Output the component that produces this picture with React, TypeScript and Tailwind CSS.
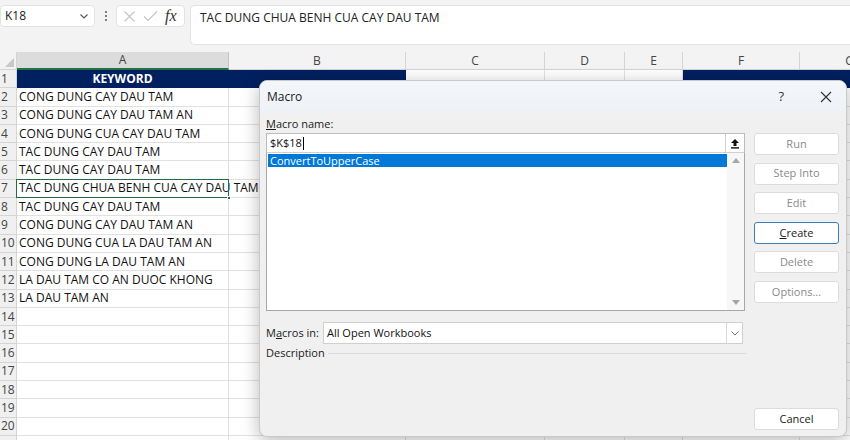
import React from "react";

const cols = [
  { k: "A", w: 212 },
  { k: "B", w: 177 },
  { k: "C", w: 139 },
  { k: "D", w: 80 },
  { k: "E", w: 58 },
  { k: "F", w: 117 },
  { k: "G", w: 100 },
];

const data: Record<number, string> = {
  2: "CONG DUNG CAY DAU TAM",
  3: "CONG DUNG CAY DAU TAM AN",
  4: "CONG DUNG CUA CAY DAU TAM",
  5: "TAC DUNG CAY DAU TAM",
  6: "TAC DUNG CAY DAU TAM",
  7: "TAC DUNG CHUA BENH CUA CAY DAU TAM",
  8: "TAC DUNG CAY DAU TAM",
  9: "CONG DUNG CAY DAU TAM AN",
  10: "CONG DUNG CUA LA DAU TAM AN",
  11: "CONG DUNG LA DAU TAM AN",
  12: "LA DAU TAM CO AN DUOC KHONG",
  13: "LA DAU TAM AN",
};

const font = { fontFamily: '"Open Sans", "Noto Sans", sans-serif' };

function Btn({ label, disabled, focused, u }: { label: string; disabled?: boolean; focused?: boolean; u?: boolean }) {
  return (
    <div
      className={`h-[22px] w-[85px] rounded-[3px] bg-white flex items-center justify-center text-[11px] ${
        focused ? "border border-[#3a7fb8]" : "border border-[#dcdcdc]"
      } ${disabled ? "text-[#8a8a8a]" : "text-[#1a1a1a]"}`}
    >
      {u ? (
        <span>
          <span className="underline">C</span>reate
        </span>
      ) : (
        label
      )}
    </div>
  );
}

export default function App() {
  const rows = Array.from({ length: 21 }, (_, i) => i + 1);
  return (
    <div className="relative w-[850px] h-[440px] overflow-hidden bg-[#f3f3f3] text-[#222]" style={font}>
      {/* Formula area */}
      <div className="h-[52px] flex items-start pt-[5px]">
        <div className="w-[95px] h-[22px] bg-white rounded-[4px] border border-[#e3e3e3] flex items-center justify-between pl-[4px] pr-[5px] text-[12px]">
          <span>K18</span>
          <svg width="10" height="10" viewBox="0 0 10 10">
            <path d="M1.5 3.5 L5 7 L8.5 3.5" fill="none" stroke="#555" strokeWidth="1.1" />
          </svg>
        </div>
        <div className="w-[21px] h-[22px] flex flex-col items-center justify-center gap-[2px]">
          <span className="w-[2px] h-[2px] bg-[#555] rounded-full" />
          <span className="w-[2px] h-[2px] bg-[#555] rounded-full" />
          <span className="w-[2px] h-[2px] bg-[#555] rounded-full" />
        </div>
        <div className="w-[69px] h-[22px] bg-white rounded-[4px] border border-[#e3e3e3] flex items-center pl-[6px] gap-[7px]">
          <svg width="13" height="13" viewBox="0 0 13 13">
            <path d="M1.5 1.5 L11.5 11.5 M11.5 1.5 L1.5 11.5" stroke="#c4c4c4" strokeWidth="1.1" />
          </svg>
          <svg width="15" height="13" viewBox="0 0 15 13">
            <path d="M1 6.5 L5 10.5 L14 1.5" fill="none" stroke="#c4c4c4" strokeWidth="1.1" />
          </svg>
          <span className="text-[16px] italic text-[#333] leading-none" style={{ fontFamily: '"Liberation Serif", serif' }}>
            fx
          </span>
        </div>
        <div className="ml-[5px] flex-1 h-[40px] bg-white rounded-l-[5px] border border-[#e3e3e3] border-r-0 pl-[9px] pt-[3px] text-[12px] text-[#222]">
          TAC DUNG CHUA BENH CUA CAY DAU TAM
        </div>
      </div>

      {/* Grid */}
      <div className="flex flex-col bg-white">
        <div className="flex h-[18px] bg-[#f3f3f3]">
          <div className="w-[17px] shrink-0 h-full border-r border-b border-[#d4d4d4] relative">
            <svg className="absolute right-[2px] bottom-[2px]" width="9" height="9" viewBox="0 0 9 9">
              <path d="M9 0 L9 9 L0 9 Z" fill="#c8c8c8" />
            </svg>
          </div>
          {cols.map((c) => (
            <div
              key={c.k}
              style={{ width: c.w }}
              className={`h-full shrink-0 flex items-center justify-center text-[12px] border-r ${
                c.k === "A"
                  ? "bg-[#dcdcdc] text-[#444] border-b-2 border-b-[#217346] border-r-[#c4c4c4]"
                  : "text-[#444] border-b border-[#d4d4d4]"
              }`}
            >
              {c.k}
            </div>
          ))}
        </div>
        {rows.map((r) => (
          <div key={r} className="flex h-[18.3px] shrink-0">
            <div className="w-[17px] shrink-0 bg-[#f0f0f0] border-r border-b border-[#d4d4d4] text-[12px] text-[#444] flex items-center pl-[1px] leading-none">
              {r <= 20 ? r : ""}
            </div>
            {cols.map((c) => {
              const navy = r === 1 && (c.k === "A" || c.k === "B" || c.k === "F" || c.k === "G");
              const isA = c.k === "A";
              return (
                <div
                  key={c.k}
                  style={{ width: c.w }}
                  className={`relative shrink-0 h-full border-r border-b ${
                    navy ? "bg-[#002060] border-[#002060]" : "border-[#e1e1e1]"
                  } ${isA && r === 7 ? "z-10" : ""}`}
                >
                  {r === 1 && isA && (
                    <div className="absolute inset-0 flex items-center justify-center text-white font-bold text-[12px]">
                      KEYWORD
                    </div>
                  )}
                  {isA && r > 1 && data[r] && (
                    <div className="absolute left-[2px] top-0 h-full flex items-center whitespace-nowrap text-[12px] text-[#111]">
                      {data[r]}
                    </div>
                  )}
                  {isA && r === 7 && (
                    <>
                      <div className="absolute left-[-1px] top-[-1px] right-[-1px] bottom-[-1px] border border-[#1f6e43]" />
                      <div className="absolute right-[-3px] bottom-[-3px] w-[4px] h-[4px] bg-[#1f6e43] border border-white" />
                    </>
                  )}
                </div>
              );
            })}
          </div>
        ))}
      </div>

      {/* Macro dialog */}
      <div className="absolute left-[259px] top-[80px] w-[588px] h-[357px] rounded-[8px] bg-[#f0f0f0] border border-[#c9c9c9] shadow-[0_4px_18px_rgba(0,0,0,0.28)] flex flex-col overflow-hidden z-20">
        <div className="h-[32px] shrink-0 bg-gradient-to-b from-[#f3f7fb] to-[#eef1f5] flex items-center pl-[7px] pr-[14px] text-[12px] text-[#1a1a1a]">
          <span>Macro</span>
          <span className="ml-auto mr-[36px] text-[13px] text-[#333]">?</span>
          <svg width="12" height="12" viewBox="0 0 12 12">
            <path d="M1 1 L11 11 M11 1 L1 11" stroke="#333" strokeWidth="1.1" />
          </svg>
        </div>
        <div className="flex flex-1 pl-[6px] pr-[8px]">
          <div className="w-[480px] flex flex-col">
            <div className="h-[18px] mt-[2px] flex items-center text-[11px] text-[#1a1a1a]">
              <span>
                <span className="underline">M</span>acro name:
              </span>
            </div>
            <div className="h-[19px] w-[479px] bg-white border border-[#bdbdbd] border-b-0 flex items-center pl-[3px] text-[11px] text-[#111] relative">
              <span>$K$18</span>
              <span className="w-[1px] h-[13px] bg-black ml-[1px]" />
              <div className="absolute right-[0px] top-[0px] w-[19px] h-[18px] border-l border-[#d0d0d0] bg-white flex items-center justify-center">
                <svg width="10" height="11" viewBox="0 0 10 11">
                  <path d="M5 1 L9 5 L6.5 5 L6.5 8 L3.5 8 L3.5 5 L1 5 Z" fill="#111" />
                  <rect x="1" y="9.2" width="8" height="1.4" fill="#111" />
                </svg>
              </div>
            </div>
            <div className="h-[159px] w-[479px] bg-white border border-[#a8a8a8] border-t-[#d0d0d0] flex">
              <div className="flex-1 pt-[1px] pl-[1px]">
                <div className="h-[13px] bg-[#0078d7] text-white text-[11px] flex items-center pl-[2px] leading-none">
                  ConvertToUpperCase
                </div>
              </div>
              <div className="w-[17px] bg-[#f7f7f7] flex flex-col items-center justify-between py-[5px]">
                <svg width="8" height="5" viewBox="0 0 8 5">
                  <path d="M0 5 L4 0 L8 5 Z" fill="#a6a6a6" />
                </svg>
                <svg width="8" height="5" viewBox="0 0 8 5">
                  <path d="M0 0 L4 5 L8 0 Z" fill="#a6a6a6" />
                </svg>
              </div>
            </div>
            <div className="mt-[11px] flex items-center h-[22px]">
              <span className="w-[57px] text-[11px] text-[#1a1a1a]">
                M<span className="underline">a</span>cros in:
              </span>
              <div className="w-[420px] h-[22px] bg-white border border-[#cfcfcf] flex items-center text-[11px] text-[#111]">
                <span className="pl-[3px] flex-1">All Open Workbooks</span>
                <div className="w-[16px] h-full border-l border-[#d8d8d8] flex items-center justify-center">
                  <svg width="8" height="5" viewBox="0 0 8 5">
                    <path d="M0.5 0.5 L4 4 L7.5 0.5" fill="none" stroke="#777" strokeWidth="1" />
                  </svg>
                </div>
              </div>
            </div>
            <div className="mt-[1px] flex items-center h-[16px]">
              <span className="text-[11px] text-[#1a1a1a]">Description</span>
              <div className="ml-[3px] w-[420px] h-[1px] bg-[#dadada]" />
            </div>
          </div>
          <div className="ml-[8px] flex flex-col pt-[20px]">
            <div className="flex flex-col gap-[7.6px]">
              <Btn label="Run" disabled />
              <Btn label="Step Into" disabled />
              <Btn label="Edit" disabled />
              <Btn label="Create" focused u />
              <Btn label="Delete" disabled />
              <Btn label="Options..." disabled />
            </div>
            <div className="mt-[105px]">
              <Btn label="Cancel" />
            </div>
          </div>
        </div>
      </div>
    </div>
  );
}
